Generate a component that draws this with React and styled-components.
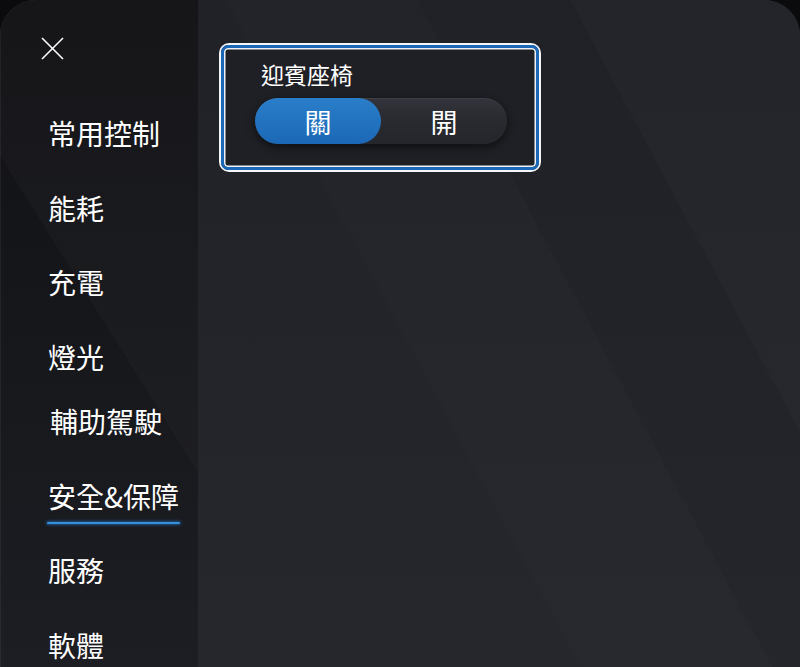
import styled, { createGlobalStyle } from 'styled-components';
import { useState } from 'react';

const colors = {
  page: '#0b0b0d',
  main: '#23242a',
  card: '#1f2025',
  blue: '#1b68b6',
  blueLight: '#2a7ec9',
  text: '#ffffff',
};

const GlobalStyle = createGlobalStyle`
  html, body {
    margin: 0;
    padding: 0;
    background: ${colors.page};
  }
  body {
    font-family: 'Noto Sans CJK TC', 'Noto Sans', sans-serif;
    color: ${colors.text};
  }
`;

const Screen = styled.div`
  display: flex;
  width: 800px;
  height: 667px;
  border-radius: 36px 36px 0 0;
  overflow: hidden;
  box-shadow: inset 0 1px 0 rgba(255, 255, 255, 0.1);
  background: ${colors.main};
`;

const Sidebar = styled.aside`
  width: 198px;
  flex-shrink: 0;
  display: flex;
  flex-direction: column;
  padding: 37px 0 0 41px;
  box-sizing: border-box;
  background:
    linear-gradient(58deg, rgba(255, 255, 255, 0) 52%, rgba(255, 255, 255, 0.018) 52%),
    linear-gradient(180deg, #111114 0%, #17181c 55%, #1d1e23 100%);
  box-shadow: inset 1px 0 0 rgba(255, 255, 255, 0.06);
`;

const CloseButton = styled.button`
  width: 23px;
  height: 23px;
  padding: 0;
  border: none;
  background: none;
  color: ${colors.text};
  cursor: pointer;
  display: flex;
`;

const Menu = styled.nav`
  display: flex;
  flex-direction: column;
  margin-top: 36px;
  margin-left: 7px;
`;

const MenuItem = styled.div`
  position: relative;
  height: 74.5px;
  display: flex;
  align-items: center;
  font-size: 28px;
  line-height: 1;
  white-space: nowrap;
  margin-top: ${(p) => (p.nudge ? '-10px' : '0')};
  padding-left: ${(p) => (p.nudge ? '2px' : '0')};
`;

const Underline = styled.span`
  position: absolute;
  left: -1px;
  width: 133px;
  top: 63px;
  height: 2px;
  border-radius: 1px;
  background: #3590dc;
  box-shadow: 0 0 3px 1px rgba(40, 130, 220, 0.55);
`;

const Main = styled.main`
  flex: 1;
  padding: 43px 0 0 21px;
  background:
    linear-gradient(62deg, rgba(0, 0, 0, 0) 0%, rgba(0, 0, 0, 0) 40%, rgba(255, 255, 255, 0.008) 40%, rgba(255, 255, 255, 0.008) 60%, rgba(0, 0, 0, 0.025) 60%, rgba(0, 0, 0, 0.025) 76%, rgba(255, 255, 255, 0.01) 76%),
    linear-gradient(180deg, #212228 0%, #24252b 60%, #26272d 100%);
`;

const Card = styled.section`
  width: 322px;
  height: 129px;
  box-sizing: border-box;
  border: 2.5px solid #f4f6f9;
  border-radius: 10px;
`;

const CardInner = styled.div`
  height: 100%;
  box-sizing: border-box;
  border: 3px solid ${colors.blue};
  border-radius: 7px;
  background: ${colors.card};
  box-shadow: inset 0 0 0 1.5px #eef2f7;
  padding: 12px 0 0 31px;
  display: flex;
  flex-direction: column;
  align-items: flex-start;
`;

const Label = styled.div`
  font-size: 23px;
  line-height: 28px;
  margin-left: 6px;
`;

const Toggle = styled.div`
  margin-top: 10px;
  width: 252px;
  height: 46px;
  display: flex;
  border-radius: 23px;
  background: linear-gradient(180deg, #34353c 0%, #2a2b31 40%, #25262b 100%);
  box-shadow: 0 3px 8px rgba(0, 0, 0, 0.55), inset 0 1px 0 rgba(255, 255, 255, 0.05);
`;

const Option = styled.button`
  flex: 1;
  border: none;
  border-radius: 23px;
  font-family: inherit;
  font-size: 27px;
  line-height: 1;
  color: ${colors.text};
  cursor: pointer;
  background: ${(p) =>
    p.active ? `linear-gradient(180deg, ${colors.blueLight} 0%, ${colors.blue} 100%)` : 'transparent'};
`;

const XIcon = () => (
  <svg width="23" height="23" viewBox="0 0 23 23" fill="none" stroke="currentColor" strokeWidth="1.6">
    <line x1="1" y1="1" x2="22" y2="22" />
    <line x1="22" y1="1" x2="1" y2="22" />
  </svg>
);

const items = ['常用控制', '能耗', '充電', '燈光', '輔助駕駛', '安全&保障', '服務', '軟體'];

export default function App() {
  const [on, setOn] = useState(false);
  return (
    <>
      <GlobalStyle />
      <Screen>
        <Sidebar>
          <CloseButton aria-label="close">
            <XIcon />
          </CloseButton>
          <Menu>
            {items.map((name) => (
              <MenuItem key={name} nudge={name === '輔助駕駛'}>
                {name}
                {name === '安全&保障' && <Underline />}
              </MenuItem>
            ))}
          </Menu>
        </Sidebar>
        <Main>
          <Card>
            <CardInner>
              <Label>迎賓座椅</Label>
              <Toggle>
                <Option active={!on} onClick={() => setOn(false)}>關</Option>
                <Option active={on} onClick={() => setOn(true)}>開</Option>
              </Toggle>
            </CardInner>
          </Card>
        </Main>
      </Screen>
    </>
  );
}
